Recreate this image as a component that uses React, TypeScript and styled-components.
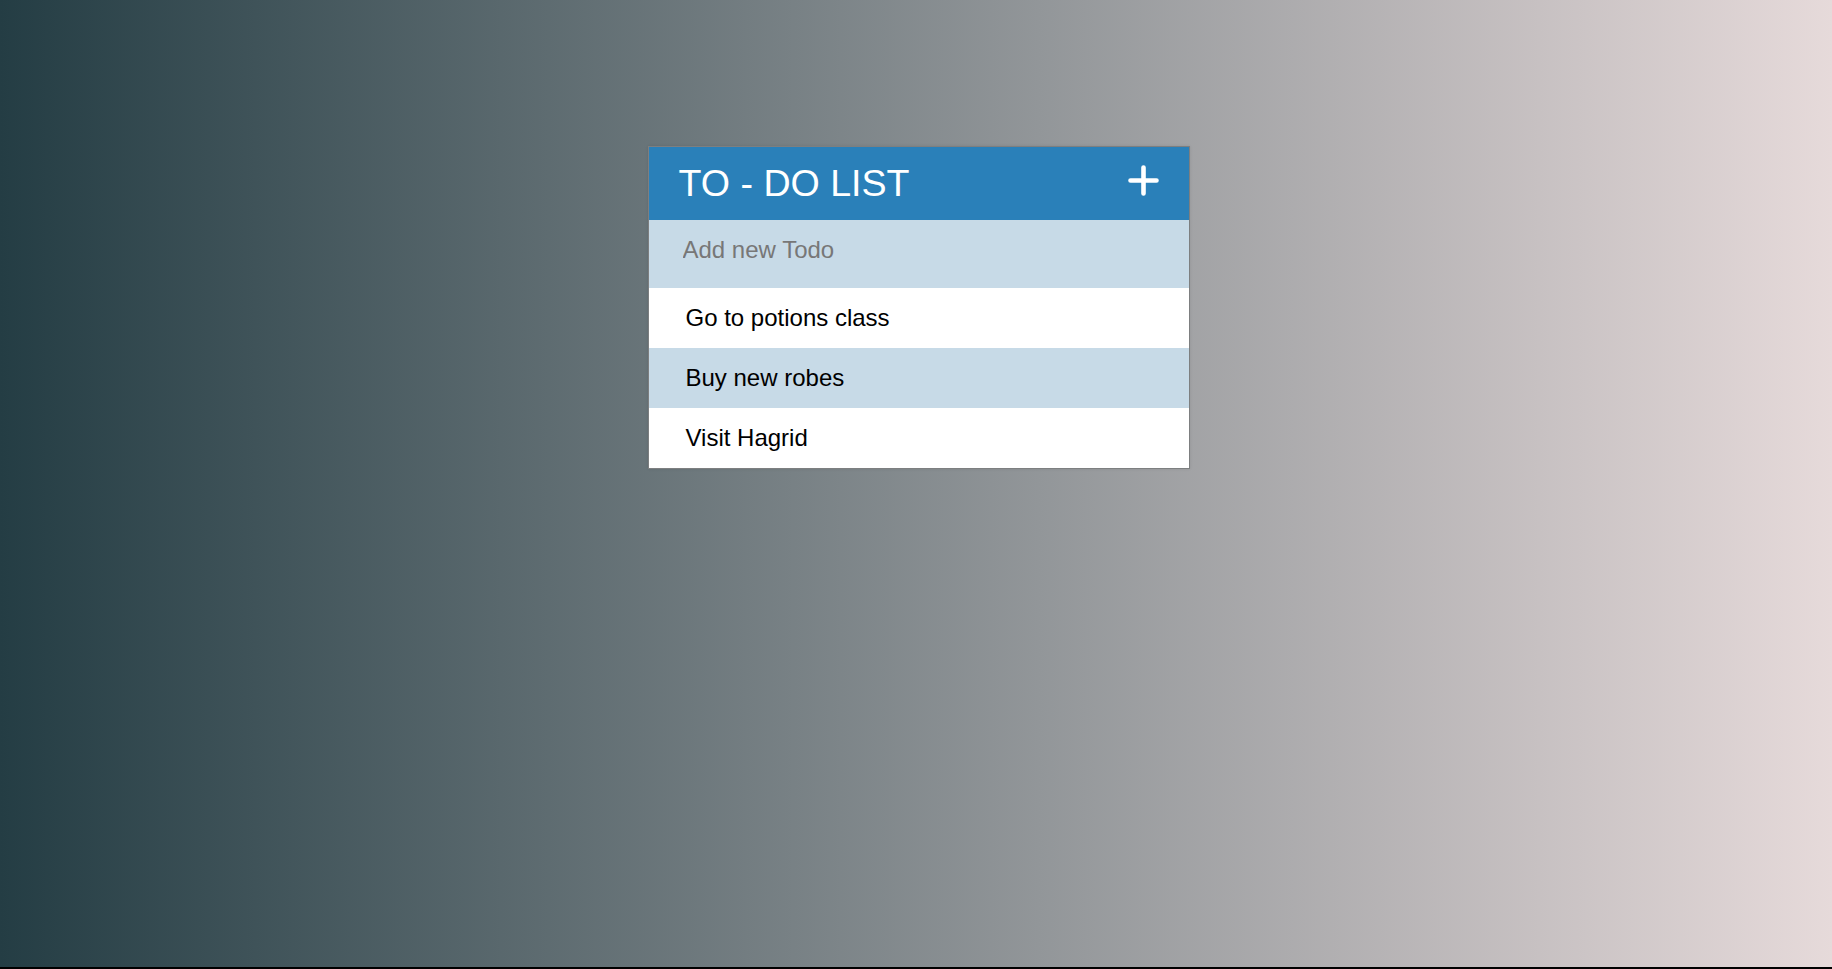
import React from "react";
import styled, { createGlobalStyle } from "styled-components";

const GlobalStyle = createGlobalStyle`
  html, body {
    margin: 0;
    padding: 0;
    background: #000;
  }
  body {
    font-family: "Liberation Sans", Arial, sans-serif;
  }
  * { box-sizing: border-box; }
`;

const Page = styled.div`
  height: 967px;
  background: linear-gradient(to right, #243d44, #e6dada);
  display: flex;
  justify-content: center;
  align-items: flex-start;
  padding: 146px 0 0 5px;
`;

const Card = styled.div`
  width: 542px;
  border: 1px solid #7d7f80;
  box-shadow: 0 0 3px rgba(0, 0, 0, 0.1);
  background: #fff;
`;

const Header = styled.div`
  height: 73px;
  background: #2a80b9;
  display: flex;
  align-items: center;
  justify-content: space-between;
  padding: 0 30px 0 30px;
`;

const Title = styled.h1`
  margin: 0;
  font-weight: 400;
  font-size: 37.6px;
  color: #fff;
  letter-spacing: 0;
`;

const AddButton = styled.button`
  border: 0;
  background: transparent;
  padding: 0;
  width: 31px;
  height: 31px;
  display: flex;
  margin-top: -6px;
  cursor: pointer;
`;

const Input = styled.input`
  display: block;
  width: 100%;
  height: 68px;
  border: 0;
  outline: none;
  background: #c7dae7;
  font-family: "Liberation Sans", Arial, sans-serif;
  font-size: 24px;
  color: #333;
  padding: 0 20px 8px 34px;
  &::placeholder {
    color: #777777;
  }
`;

const List = styled.ul`
  list-style: none;
  margin: 0;
  padding: 0;
`;

const Item = styled.li<{ $shaded: boolean }>`
  height: 60px;
  display: flex;
  align-items: center;
  padding: 0 20px 0 37px;
  font-size: 24px;
  color: #000;
  background: ${(p) => (p.$shaded ? "#c7dae7" : "#ffffff")};
`;

const todos = ["Go to potions class", "Buy new robes", "Visit Hagrid"];

export default function App() {
  return (
    <>
      <GlobalStyle />
      <Page>
        <Card>
          <Header>
            <Title>TO - DO LIST</Title>
            <AddButton aria-label="Add">
              <svg width="31" height="31" viewBox="0 0 31 31">
                <path
                  d="M15.5 2.5 V28.5 M2.5 15.5 H28.5"
                  stroke="#fff"
                  strokeWidth="4.6"
                  strokeLinecap="round"
                  fill="none"
                />
              </svg>
            </AddButton>
          </Header>
          <Input placeholder="Add new Todo" />
          <List>
            {todos.map((t, i) => (
              <Item key={t} $shaded={i % 2 === 1}>
                {t}
              </Item>
            ))}
          </List>
        </Card>
      </Page>
    </>
  );
}
